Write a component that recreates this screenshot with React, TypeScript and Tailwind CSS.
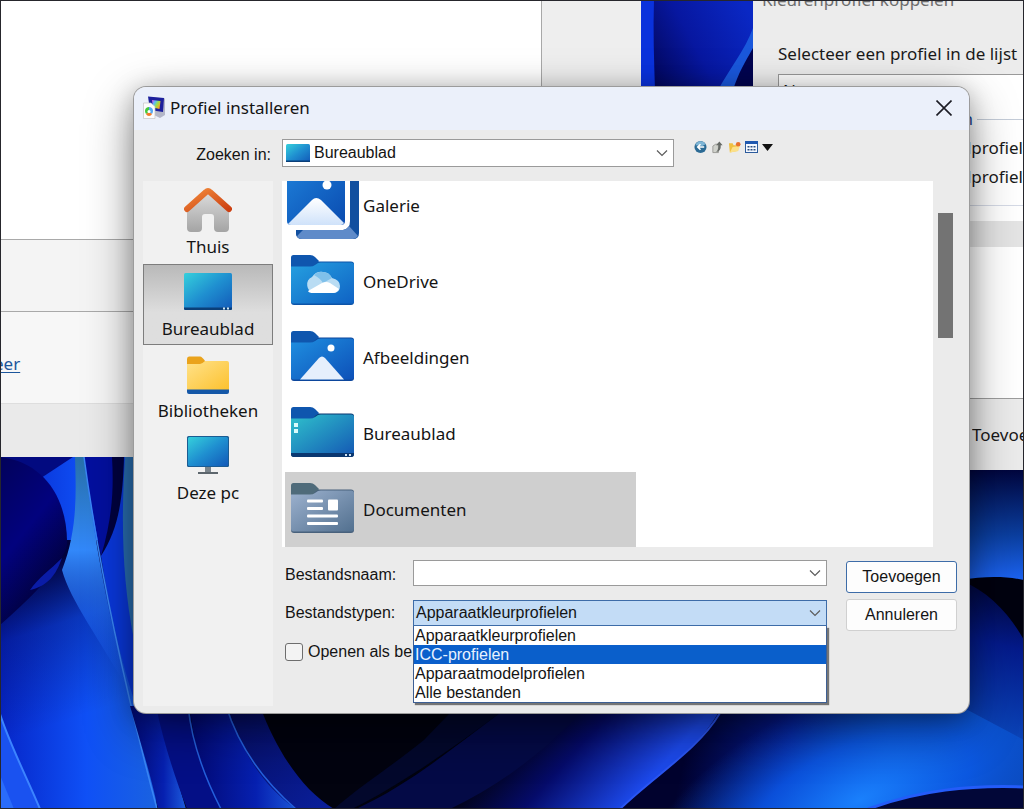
import { useState, type ReactNode } from "react";

const segoe = "font-['Noto_Sans',sans-serif] text-[17px] leading-6";

function Wallpaper() {
  return (
    <svg className="absolute inset-0 h-full w-full" viewBox="0 0 1024 809" preserveAspectRatio="xMidYMid slice" aria-hidden="true">
      <defs>
        <linearGradient id="petal" x1="0" y1="0" x2="1" y2="0">
          <stop offset="0" stopColor="#0626c8" />
          <stop offset="0.55" stopColor="#0f50f6" />
          <stop offset="1" stopColor="#1a62e0" />
        </linearGradient>
        <linearGradient id="shade" gradientUnits="userSpaceOnUse" x1="20" y1="570" x2="70" y2="720">
          <stop offset="0" stopColor="#01023c" />
          <stop offset="0.4" stopColor="#01023c" stopOpacity="0.3" />
          <stop offset="1" stopColor="#01023c" stopOpacity="0" />
        </linearGradient>
        <linearGradient id="lobe" x1="0" y1="0" x2="0.5" y2="1">
          <stop offset="0" stopColor="#02025a" />
          <stop offset="0.5" stopColor="#02027e" />
          <stop offset="1" stopColor="#010130" />
        </linearGradient>
        <linearGradient id="strip" x1="0" y1="0" x2="0" y2="1">
          <stop offset="0" stopColor="#2870a8" />
          <stop offset="0.4" stopColor="#3288fa" />
          <stop offset="1" stopColor="#1556f5" stopOpacity="0" />
        </linearGradient>
        <linearGradient id="arc" x1="0" y1="0" x2="1" y2="0">
          <stop offset="0" stopColor="#020872" />
          <stop offset="0.6" stopColor="#0620b0" />
          <stop offset="1" stopColor="#1d5bdc" />
        </linearGradient>
        <linearGradient id="arcDark" x1="0" y1="0" x2="1" y2="1">
          <stop offset="0" stopColor="#050c60" />
          <stop offset="1" stopColor="#0a1f9c" />
        </linearGradient>
        <linearGradient id="bandR" gradientUnits="userSpaceOnUse" x1="540" y1="700" x2="640" y2="790">
          <stop offset="0" stopColor="#01020f" />
          <stop offset="0.45" stopColor="#050b6a" />
          <stop offset="1" stopColor="#1c49ea" />
        </linearGradient>
        <radialGradient id="glow" gradientUnits="userSpaceOnUse" cx="0" cy="0" r="1" gradientTransform="translate(860 800) rotate(-25) scale(240 110)">
          <stop offset="0" stopColor="#1a80fc" />
          <stop offset="0.5" stopColor="#0c5cea" stopOpacity="0.8" />
          <stop offset="1" stopColor="#0b4fbe" stopOpacity="0" />
        </radialGradient>
        <linearGradient id="rightBase" gradientUnits="userSpaceOnUse" x1="690" y1="735" x2="960" y2="800">
          <stop offset="0" stopColor="#01022e" />
          <stop offset="0.35" stopColor="#051b96" />
          <stop offset="0.7" stopColor="#0b4cc0" />
          <stop offset="1" stopColor="#0a48bc" />
        </linearGradient>
        <linearGradient id="rightSide" gradientUnits="userSpaceOnUse" x1="1010" y1="580" x2="975" y2="740">
          <stop offset="0" stopColor="#010430" />
          <stop offset="0.4" stopColor="#041a8a" />
          <stop offset="1" stopColor="#0b48bc" />
        </linearGradient>
        <linearGradient id="rightTop" gradientUnits="userSpaceOnUse" x1="0" y1="470" x2="0" y2="580">
          <stop offset="0" stopColor="#01063e" />
          <stop offset="0.6" stopColor="#0b3fa0" />
          <stop offset="1" stopColor="#1c63f0" />
        </linearGradient>
        <linearGradient id="slit" gradientUnits="userSpaceOnUse" x1="641" y1="80" x2="753" y2="20">
          <stop offset="0" stopColor="#02044e" />
          <stop offset="0.5" stopColor="#0717a0" />
          <stop offset="1" stopColor="#0a28c4" />
        </linearGradient>
      </defs>
      <rect width="1024" height="809" fill="#02030f" />
      <path d="M0 450H140V720C146 745 156 780 157 809H0Z" fill="url(#petal)" />
      <path d="M0 540H140V760H0Z" fill="url(#shade)" />
      <path d="M0 455H76L38 480 0 462Z" fill="#020a80" />
      <path d="M0 457C45 462 68 500 67 545C62 565 40 590 0 625Z" fill="url(#lobe)" />
      <path d="M30 590C38 578 50 570 62 558C56 575 48 586 30 590Z" fill="#0a1ca6" />
      <path d="M75 457H84C92 520 104 600 128 690C100 640 70 600 62 570C78 530 76 490 75 457Z" fill="url(#strip)" />
      <path d="M84 457H126C124 490 122 530 101 556C94 520 88 490 84 457Z" fill="#030f9e" />
      <path d="M112 457H124C124 500 120 535 101 556C112 520 114 490 112 457Z" fill="#020340" />
      <path d="M101 556C118 530 123 500 124 457H134V700C118 650 108 600 101 556Z" fill="#0a38dc" />
      <path d="M125 457H134V640C122 580 121 520 125 457Z" fill="#2a70b4" />
      <path d="M84 457C98 560 120 670 157 809" fill="none" stroke="#3a86f4" strokeWidth="1.500" />
      <path d="M130 706H156L186 809H158C152 780 140 740 130 706Z" fill="url(#arc)" />
      <path d="M156 706H190C192 745 206 780 221 809H187C176 780 164 745 156 706Z" fill="#040f86" />
      <path d="M190 706H228C240 750 268 785 300 809H221C204 780 193 745 190 706Z" fill="url(#arc)" />
      <path d="M228 706H260C276 750 302 790 334 809H296C262 785 240 750 228 706Z" fill="url(#arcDark)" />
      <path d="M188 706C192 745 206 780 221 809M226 706C240 750 268 785 296 809" fill="none" stroke="#2460dc" strokeWidth="1.500" />
      <path d="M334 809C360 786 392 766 424 740L450 713H500C450 750 400 785 352 809Z" fill="#03082c" />
      <path d="M356 809C410 784 450 750 500 713H620L500 809Z" fill="#040a46" />
      <path d="M450 809C500 785 540 755 580 713H722C700 750 655 775 620 809Z" fill="url(#bandR)" />
      <path d="M960 575H1024V740H960Z" fill="url(#rightSide)" />
      <path d="M722 706H960L1024 740V809H620C655 775 700 750 722 706Z" fill="url(#rightBase)" />
      <path d="M722 706H960L1024 740V809H620C655 775 700 750 722 706Z" fill="url(#glow)" />
      <path d="M720 713C698 750 655 775 620 809" fill="none" stroke="#2a55f2" strokeWidth="2" />
      <path d="M960 465H1024V582H960Z" fill="url(#rightTop)" />
      <path d="M960 580C985 576 1005 576 1024 580V640C1010 615 990 592 960 580Z" fill="#01020f" />
      <path d="M0 714C10 745 28 780 40 809H0Z" fill="#1a52f0" />
      <path d="M0 714C10 745 28 780 40 809" fill="none" stroke="#3c84ff" strokeWidth="2" />
      <path d="M0 775L14 809H0Z" fill="#2a6cfa" />
      <path d="M868 809C920 790 970 785 1024 787V809Z" fill="#020738" />
      <path d="M868 809C920 790 970 785 1024 787" fill="none" stroke="#245cf8" strokeWidth="3" />
      <path d="M641 0H753V90H641Z" fill="url(#slit)" />
      <path d="M641 0H654C653 30 654 60 655 90H641Z" fill="#0a32dc" />
      <path d="M753 28C745 50 730 68 718 90H753Z" fill="#1a58dc" />
      <path d="M753 48C745 62 738 74 733 90H753Z" fill="#020450" />
    </svg>
  );
}

function AppIcon() {
  return (
    <svg className="h-6 w-6" viewBox="0 0 24 24" aria-hidden="true">
      <defs>
        <linearGradient id="rainbow" x1="0" y1="0" x2="1" y2="0.6">
          <stop offset="0" stopColor="#e84be0" />
          <stop offset="0.35" stopColor="#58b8ff" />
          <stop offset="0.65" stopColor="#9be04a" />
          <stop offset="1" stopColor="#ffa020" />
        </linearGradient>
      </defs>
      <path d="M7 1L22 2.500V19L17 22 7 17Z" fill="#b4b7c8" />
      <path d="M5 0.500L21 2 20 16 7 14Z" fill="#1c1f9c" />
      <path d="M9 4L17.500 5 16.500 13 10 11.500Z" fill="url(#rainbow)" />
      <path d="M0.500 7H8L12 10.500V22.500H0.500Z" fill="#fcfcfc" stroke="#c4c4c4" strokeWidth="0.700" />
      <path d="M6 11C2 11 1 15 3 18L6 16Z" fill="#45c93c" />
      <path d="M6 11C10 11 11 15 9 18L6 16Z" fill="#57a9f0" />
      <path d="M3 18C4 20.500 8 20.500 9 18L6 16Z" fill="#f07a28" />
      <circle cx="6" cy="15.500" r="1.500" fill="#fff" />
    </svg>
  );
}

function Screen({ x, y, w, h, id }: { x: number; y: number; w: number; h: number; id: string }) {
  return (
    <>
      <defs>
        <linearGradient id={id} x1="0" y1="0" x2="1" y2="1">
          <stop offset="0" stopColor="#35d0dc" />
          <stop offset="0.5" stopColor="#1f8fd0" />
          <stop offset="1" stopColor="#1259b8" />
        </linearGradient>
      </defs>
      <rect x={x} y={y} width={w} height={h} rx="1.5" fill={`url(#${id})`} />
    </>
  );
}

function HomeIcon() {
  return (
    <svg className="size-12" viewBox="0 0 48 48" aria-hidden="true">
      <defs>
        <linearGradient id="wall" x1="0" y1="0" x2="0" y2="1">
          <stop offset="0" stopColor="#dcdcdc" />
          <stop offset="1" stopColor="#a4a4a4" />
        </linearGradient>
        <linearGradient id="roof" x1="0" y1="0" x2="1" y2="1">
          <stop offset="0" stopColor="#f28a3a" />
          <stop offset="1" stopColor="#cc4012" />
        </linearGradient>
      </defs>
      <path d="M24 5L45 23V41Q45 45 41 45H34Q30 45 30 41V30Q30 27 27 27H21Q18 27 18 30V41Q18 45 14 45H7Q3 45 3 41V23Z" fill="url(#wall)" />
      <path d="M3 22L22 5Q24 3 26 5L45 22" fill="none" stroke="url(#roof)" strokeWidth="6" strokeLinecap="round" strokeLinejoin="round" />
    </svg>
  );
}

function DesktopIcon() {
  return (
    <svg className="size-12" viewBox="0 0 48 48" aria-hidden="true">
      <Screen x={0} y={4} w={48} h={37} id="desk" />
      <path d="M0 38.500H48V39.500Q48 41 46.500 41H1.500Q0 41 0 39.500Z" fill="#0b3f78" />
      <path d="M39 38.500h2v2h-2zM43 38.500h2v2h-2z" fill="#cfe8f5" />
    </svg>
  );
}

function LibraryIcon() {
  return (
    <svg className="size-12" viewBox="0 0 48 48" aria-hidden="true">
      <defs>
        <linearGradient id="yellow" x1="0" y1="0" x2="1" y2="1">
          <stop offset="0" stopColor="#ffe28a" />
          <stop offset="1" stopColor="#fcc12e" />
        </linearGradient>
      </defs>
      <path d="M3 8Q3 5.500 5 5.500H16Q18 5.500 21 10V18H3Z" fill="#eaa31c" />
      <path d="M3 13H16Q18 13 21 10H43Q45 10 45 12V39H3Z" fill="url(#yellow)" />
      <path d="M3 38.500H45V41Q45 43 43 43H5Q3 43 3 41Z" fill="#1558a8" />
    </svg>
  );
}

function PcIcon() {
  return (
    <svg className="size-12" viewBox="0 0 48 48" aria-hidden="true">
      <path d="M21 33h6v7h-6z" fill="#7b858c" />
      <path d="M14 39h20v2H14z" fill="#5d666d" />
      <rect x="3" y="3" width="42" height="31" rx="1.500" fill="#1b5c93" />
      <Screen x={4} y={4} w={40} h={29} id="pc" />
    </svg>
  );
}

type FolderProps = { id: string; from: string; to: string; tab: string; edge: string; children?: ReactNode };

function Folder({ id, from, to, tab, edge, children }: FolderProps) {
  return (
    <svg className="h-[75px] w-[78px] shrink-0" viewBox="0 0 78 75" aria-hidden="true">
      <defs>
        <linearGradient id={id} x1="0" y1="0" x2="1" y2="1">
          <stop offset="0" stopColor={from} />
          <stop offset="1" stopColor={to} />
        </linearGradient>
      </defs>
      <path d="M6 13.500Q6 11 8.500 11H25Q28 11 30 13L34 17 30 25H6Z" fill={tab} />
      <path d="M6 57V58Q6 61 9 61H66Q69 61 69 58V20Q69 17.500 66 17.500H34L30 20Z" fill={edge} />
      <path d="M6 22.500H25Q28 22.500 30 21L33 19Q34 18.500 36 18.500H66.500Q69 18.500 69 21V57Q69 59.500 66.500 59.500H8.500Q6 59.500 6 57Z" fill={`url(#${id})`} />
      {children}
    </svg>
  );
}

function GalleryIcon() {
  return (
    <svg className="h-[75px] w-[78px] shrink-0" viewBox="0 0 78 75" aria-hidden="true">
      <defs>
        <linearGradient id="galFront" x1="0" y1="0" x2="1" y2="1">
          <stop offset="0" stopColor="#1d7ed8" />
          <stop offset="1" stopColor="#0a4bb0" />
        </linearGradient>
        <linearGradient id="galHill" x1="0" y1="0" x2="0" y2="1">
          <stop offset="0" stopColor="#ffffff" />
          <stop offset="1" stopColor="#cfe2fa" />
        </linearGradient>
      </defs>
      <path d="M11 62H58Q65 61 65 53V0H74V65Q74 71 68 71H17Q11 71 11 65Z" fill="#114f9f" />
      <path d="M16 62H58Q62 61 64 58L73 68Q71 71 68 71H17Q13 71 12 68Z" fill="#5f8bc9" />
      <path d="M11 62H18L12 68Q11 67 11 65Z" fill="#114f9f" />
      <path d="M2 0H60V53Q60 57 56 57H6Q2 57 2 53Z" fill="url(#galFront)" />
      <path d="M3 56L27 32Q31 28 36 32L59 55Q58 57 56 57H6Q4 57 3 56Z" fill="url(#galHill)" />
      <circle cx="42" cy="17" r="4.500" fill="#fff" />
    </svg>
  );
}

const files: { name: string; icon: ReactNode }[] = [
  { name: "Galerie", icon: <GalleryIcon /> },
  {
    name: "OneDrive",
    icon: (
      <Folder id="fOne" from="#25a0e0" to="#0f62c4" tab="#0f56ae" edge="#0d54a8">
        <path d="M29 49A8.500 8.500 0 0 1 27 33Q31 27 38 28Q44 28 47 34Q55 36 55 42Q55 49 48 49Z" fill="#b9dcf3" />
        <path d="M29 31Q33 27 38 28Q44 28 47 34L38 39Q35 34 29 31Z" fill="#7fc0ea" />
        <path d="M23 47L37 39Q41 37 45 39L54 45Q52 49 48 49H28Q24 49 23 47Z" fill="#fff" />
      </Folder>
    ),
  },
  {
    name: "Afbeeldingen",
    icon: (
      <Folder id="fPic" from="#1f8fe0" to="#0d50b8" tab="#0f56ae" edge="#0c469c">
        <path d="M15 59.500L34 38Q37 35 40 38L59 59.500Z" fill="#e6effc" />
        <circle cx="46" cy="28" r="3.500" fill="#fff" />
      </Folder>
    ),
  },
  {
    name: "Bureaublad",
    icon: (
      <Folder id="fDesk" from="#2fc2cc" to="#1458b4" tab="#0f56ae" edge="#0a3770">
        <path d="M6 57H69V58Q69 61 66 61H9Q6 61 6 58Z" fill="#0a3770" />
        <path d="M9 27h4v4H9zM9 33h4v4H9z" fill="#d9fbfb" />
        <path d="M60 58h2v2h-2zM64 58h2v2h-2z" fill="#cfe4f5" />
      </Folder>
    ),
  },
  {
    name: "Documenten",
    icon: (
      <Folder id="fDoc" from="#9db2cf" to="#52708f" tab="#4f6b7a" edge="#48617c">
        <g fill="#fff">
          <rect x="22" y="27.500" width="16" height="3" rx="1" />
          <rect x="22" y="35" width="16" height="3" rx="1" />
          <rect x="43" y="27.500" width="10" height="11" rx="1" />
          <rect x="22" y="42.500" width="31" height="3" rx="1" />
          <rect x="22" y="50" width="31" height="3" rx="1" />
        </g>
      </Folder>
    ),
  },
];

const places: { name: string; icon: ReactNode }[] = [
  { name: "Thuis", icon: <HomeIcon /> },
  { name: "Bureaublad", icon: <DesktopIcon /> },
  { name: "Bibliotheken", icon: <LibraryIcon /> },
  { name: "Deze pc", icon: <PcIcon /> },
];

const fileTypes = ["Apparaatkleurprofielen", "ICC-profielen", "Apparaatmodelprofielen", "Alle bestanden"];

function Chevron() {
  return (
    <svg className="pointer-events-none absolute top-1/2 right-[6px] h-2 w-3 -translate-y-1/2" viewBox="0 0 12 8" fill="none" stroke="#5c5c5c" strokeWidth="1.200" aria-hidden="true">
      <path d="M1 1.500L6 6.500 11 1.500" />
    </svg>
  );
}

function Toolbar() {
  return (
    <div className="flex w-[263px] gap-1 pt-[1px]">
      <button type="button" aria-label="Vorige map" className="h-[14px] w-[13px]">
        <svg className="h-[14px] w-[13px]" viewBox="0 0 14 14" aria-hidden="true">
          <circle cx="7" cy="7" r="6.500" fill="#2b6a94" />
          <path d="M1.500 5A6 6 0 0 1 12.500 4L9 6Z" fill="#7fb6d6" />
          <path d="M7 4L4 7 7 10M4.500 7H11" fill="none" stroke="#fff" strokeWidth="1.700" />
        </svg>
      </button>
      <button type="button" aria-label="Eén niveau omhoog" className="h-[14px] w-[13px]">
        <svg className="h-[14px] w-[13px]" viewBox="0 0 14 14" aria-hidden="true">
          <path d="M2 6L5 4H8V13H2Z" fill="#d0d2cc" stroke="#8a8a86" strokeWidth="0.800" />
          <path d="M5 12.500Q8 11 8 5H5.500L9 1 12.500 5H10.500Q11 12 5 12.500Z" fill="#666a66" />
        </svg>
      </button>
      <button type="button" aria-label="Nieuwe map maken" className="h-[14px] w-[13px]">
        <svg className="h-[14px] w-[13px]" viewBox="0 0 14 14" aria-hidden="true">
          <path d="M1 3H5L6 5H11V11L2 13Z" fill="#f0c041" />
          <path d="M2 13L5 7 13 6 10.500 11.500Z" fill="#fbe08a" />
          <circle cx="11" cy="4" r="2.500" fill="#e8702c" />
        </svg>
      </button>
      <button type="button" aria-label="Menu Beeld" className="flex h-[14px] w-[28px] items-center gap-1">
        <svg className="h-[14px] w-[13px] shrink-0" viewBox="0 0 13 14" aria-hidden="true">
          <rect x="0.500" y="1.500" width="12" height="11" fill="#f4f8ff" stroke="#2c5b9c" />
          <path d="M0 1H13V4H0Z" fill="#1f58b0" />
          <path d="M2.500 6h2v1.500h-2zM5.500 6h2v1.500h-2zM8.500 6h2v1.500h-2zM2.500 9h2v1.500h-2zM5.500 9h2v1.500h-2zM8.500 9h2v1.500h-2z" fill="#2c4f80" />
        </svg>
        <svg className="h-[7px] w-[11px] shrink-0" viewBox="0 0 11 7" aria-hidden="true">
          <path d="M0 0H11L5.500 7Z" fill="#111" />
        </svg>
      </button>
    </div>
  );
}

function SettingsWindow() {
  return (
    <section className="absolute top-0 right-[383px] left-0 flex flex-col bg-white">
      <div className="flex h-[239px]">
        <div className="flex-1 border-r border-[#a8a8a8] bg-white" />
        <div className="w-[99px] bg-[#eeeeee]" />
      </div>
      <div className="h-[73px] border-y border-[#a9a9a9] bg-[#f4f4f4]" />
      <div className="flex h-[91px] items-center bg-[#f7f7f7] pt-3">
        <a href="#meer" className={`${segoe} -ml-[6px] text-[#1c569c] underline underline-offset-2`}>
          eer
        </a>
      </div>
      <div className="h-[54px] border-t border-[#dedede] bg-[#eaeaea]" />
    </section>
  );
}

function AssociateWindow() {
  return (
    <section className={`${segoe} absolute top-0 right-0 flex w-[271px] flex-col overflow-hidden bg-[#ececec] text-[#1a1a1a]`}>
      <h2 className="-mt-3 pl-[9px] whitespace-nowrap text-[#6e6e6e]">Kleurenprofiel koppelen</h2>
      <p className="mt-[30px] pl-[25px] whitespace-nowrap">Selecteer een profiel in de lijst</p>
      <div className="mt-2 ml-[25px] flex h-[131px] flex-col border-t border-l border-[#9a9a9a] bg-white pl-1">
        <span className="h-8 pt-1">N</span>
        <div className="flex items-center gap-1 pl-[170px]">
          <span className="text-[#1c3f8c]">en</span>
          <hr className="flex-1 border-[#c4ccd8]" />
        </div>
        <p className="pt-[5px] pr-[1px] text-right">lprofiel</p>
        <p className="pt-[5px] pr-[1px] text-right">lprofiel</p>
      </div>
      <div className="h-4 border-t border-[#d5dae6] bg-white" />
      <div className="h-[26px] bg-[#e4e4e4]" />
      <div className="h-[151px] bg-white" />
      <div className="flex h-[72px] items-center justify-end border-t border-[#9c9c9c] bg-[#ebebeb]">
        <button type="button" className="w-[52px] overflow-hidden text-left">
          Toevoegen
        </button>
      </div>
    </section>
  );
}

function InstallDialog() {
  const [place, setPlace] = useState("Bureaublad");
  const [file, setFile] = useState("Documenten");
  const [type, setType] = useState("Apparaatkleurprofielen");
  const [open, setOpen] = useState(true);

  return (
    <section
      role="dialog"
      aria-labelledby="dialog-title"
      className="absolute top-[87px] right-[55px] left-[134px] flex flex-col rounded-[12px] bg-[#ebebeb] font-['Liberation_Sans',Arial,sans-serif] text-base leading-5 text-[#141414] shadow-[0_16px_50px_rgba(0,0,0,0.4),0_4px_24px_rgba(0,0,0,0.25)] ring-1 ring-[#9b9b9b]"
    >
      <header className="flex h-[43px] items-center gap-[3px] rounded-t-[12px] bg-[#ebf0fa] pr-[15px] pb-[2px] pl-[9px]">
        <AppIcon />
        <h1 id="dialog-title" className={`${segoe} flex-1`}>
          Profiel installeren
        </h1>
        <button type="button" aria-label="Sluiten" className="p-0.5">
          <svg className="size-4" viewBox="0 0 16 16" stroke="#1c1c24" strokeWidth="1.600" aria-hidden="true">
            <path d="M0.500 0.500L15.500 15.500M15.500 0.500L0.500 15.500" />
          </svg>
        </button>
      </header>

      <div className="flex pt-[9px] pr-3">
        <label htmlFor="look-in" className="w-[148px] pt-[6px] pr-[11px] text-right">
          Zoeken in:
        </label>
        <div className="relative mr-5 flex-1">
          <select id="look-in" className="h-7 w-full appearance-none border border-[#9a9a9a] bg-white pl-[31px] outline-none">
            <option>Bureaublad</option>
          </select>
          <svg className="pointer-events-none absolute top-[5px] left-1 h-[18px] w-6" viewBox="0 0 24 18" aria-hidden="true">
            <Screen x={0} y={0} w={24} h={18} id="lookIn" />
            <path d="M0 16.500H24V18H0Z" fill="#0b3f78" />
          </svg>
          <Chevron />
        </div>
        <Toolbar />
      </div>

      <div className="flex gap-[9px] pt-[14px] pr-3 pb-[7px] pl-[9px]">
        <nav className="flex w-[130px] flex-col gap-px bg-[#f1f1f1] pt-px">
          {places.map((p) => (
            <button
              key={p.name}
              type="button"
              onClick={() => setPlace(p.name)}
              className={`${segoe} flex h-[81px] flex-col items-center border pt-1 ${
                p.name === place ? "border-[#7d7d7d] bg-linear-to-b from-[#b9b9b9] to-[#dedede] to-60%" : "border-transparent"
              }`}
            >
              {p.icon}
              <span>{p.name}</span>
            </button>
          ))}
        </nav>

        <div className="flex flex-1 flex-col">
          <div className="flex gap-[5px] pr-1">
            <div className="flex h-[366px] flex-1 flex-col justify-end overflow-hidden bg-white pl-[3px]">
              <ul className="flex w-[351px] flex-col gap-px">
                {files.map((f) => (
                  <li key={f.name}>
                    <button
                      type="button"
                      onClick={() => setFile(f.name)}
                      className={`${segoe} flex h-[75px] w-full items-center text-left ${f.name === file ? "bg-[#cfcfcf]" : ""}`}
                    >
                      {f.icon}
                      <span>{f.name}</span>
                    </button>
                  </li>
                ))}
              </ul>
            </div>
            <div className="w-[15px] pt-8">
              <div className="h-[125px] bg-[#737373]" />
            </div>
          </div>

          <form className="flex gap-[19px] pt-[13px] pl-[3px]" onSubmit={(e) => e.preventDefault()}>
            <div className="flex flex-1 flex-col">
              <div className="flex items-center">
                <label htmlFor="file-name" className="w-32 pt-1">
                  Bestandsnaam:
                </label>
                <div className="relative flex-1">
                  <input id="file-name" type="text" className="block h-[26px] w-full border border-[#9a9a9a] bg-white px-1 outline-none" />
                  <Chevron />
                </div>
              </div>
              <div className="flex items-center pt-[14px]">
                <label htmlFor="file-type" className="w-32">
                  Bestandstypen:
                </label>
                <div className="relative flex-1">
                  <button
                    id="file-type"
                    type="button"
                    aria-haspopup="listbox"
                    aria-expanded={open}
                    onClick={() => setOpen(!open)}
                    className="block h-[26px] w-full border border-[#3d6ca8] bg-[#c3dcf6] pl-[2px] text-left"
                  >
                    {type}
                  </button>
                  <Chevron />
                  {open && (
                    <ul role="listbox" aria-label="Bestandstypen" className="absolute top-[26px] right-0 left-0 z-10 border border-t-0 border-[#3d5f94] bg-white shadow-[2px_2px_1px_rgba(0,0,0,0.5)]">
                      {fileTypes.map((t, i) => (
                        <li
                          key={t}
                          role="option"
                          aria-selected={i === 1}
                          onClick={() => {
                            setType(t);
                            setOpen(false);
                          }}
                          className={`h-[19px] pl-px leading-[19px] ${i === 1 ? "bg-[#0a5fcb] text-[#e8f2ff]" : ""}`}
                        >
                          {t}
                        </li>
                      ))}
                    </ul>
                  )}
                </div>
              </div>
              <label className="flex items-center gap-[5px] pt-4">
                <input type="checkbox" className="size-[18px] appearance-none rounded-[3px] border border-[#6d6d6d] bg-[#f3f3f3] checked:bg-[#0a5fcb]" />
                Openen als be
              </label>
            </div>
            <div className="flex w-[111px] flex-col gap-[6px] pt-px">
              <button type="submit" className="h-8 rounded-[3px] border border-[#3d6ca8] bg-[#fdfdfd]">
                Toevoegen
              </button>
              <button type="button" className="h-8 rounded-[3px] border border-[#d0d0d0] bg-[#fdfdfd]">
                Annuleren
              </button>
            </div>
          </form>
          <div className="h-[44px]" />
        </div>
      </div>
    </section>
  );
}

export default function App() {
  return (
    <main className="relative min-h-screen overflow-hidden bg-[#02030f]">
      <Wallpaper />
      <SettingsWindow />
      <AssociateWindow />
      <InstallDialog />
      <div className="pointer-events-none absolute inset-0 border border-[#26262c]" />
    </main>
  );
}
